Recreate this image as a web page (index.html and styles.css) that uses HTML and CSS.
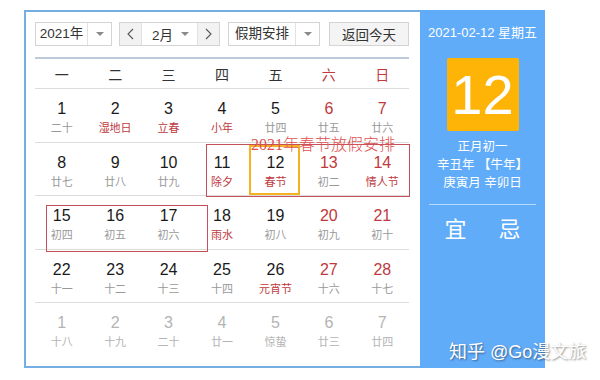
FILE: index.html
```html
<!DOCTYPE html>
<html lang="zh-CN">
<head>
    <meta charset="UTF-8">
    <meta name="viewport" content="width=device-width, initial-scale=1.0">
    <title>万年历</title>
    <link rel="stylesheet" href="styles.css">
</head>
<body>
    <div class="frame">
        <div class="main">
            <div class="toolbar">
                <div class="select year">
                    <span class="val">2021年</span>
                    <span class="arrow"><i class="caret"></i></span>
                </div>
                <div class="month-group">
                    <span class="nav">
                        <svg width="7" height="12" viewBox="0 0 7 12"><path d="M6 1L1 6l5 5" fill="none" stroke="#555" stroke-width="1.1"/></svg>
                    </span>
                    <div class="month">
                        <span>2月</span>
                        <i class="caret"></i>
                    </div>
                    <span class="nav">
                        <svg width="7" height="12" viewBox="0 0 7 12"><path d="M1 1l5 5-5 5" fill="none" stroke="#555" stroke-width="1.1"/></svg>
                    </span>
                </div>
                <div class="select holiday">
                    <span class="val">假期安排</span>
                    <span class="arrow"><i class="caret"></i></span>
                </div>
                <button class="today-btn">返回今天</button>
            </div>

            <div class="cal">
                <div class="week">
                    <span>一</span><span>二</span><span>三</span><span>四</span><span>五</span>
                    <span class="red">六</span><span class="red">日</span>
                </div>
                <div class="row">
                    <div class="cell"><b>1</b><em>二十</em></div>
                    <div class="cell"><b>2</b><em class="fest">湿地日</em></div>
                    <div class="cell"><b>3</b><em class="fest">立春</em></div>
                    <div class="cell"><b>4</b><em class="fest">小年</em></div>
                    <div class="cell"><b>5</b><em>廿四</em></div>
                    <div class="cell weekend"><b>6</b><em>廿五</em></div>
                    <div class="cell weekend"><b>7</b><em>廿六</em></div>
                </div>
                <div class="row short">
                    <div class="cell"><b>8</b><em>廿七</em></div>
                    <div class="cell"><b>9</b><em>廿八</em></div>
                    <div class="cell"><b>10</b><em>廿九</em></div>
                    <div class="cell"><b>11</b><em class="fest">除夕</em></div>
                    <div class="cell today"><b>12</b><em class="fest">春节</em></div>
                    <div class="cell weekend"><b>13</b><em>初二</em></div>
                    <div class="cell weekend"><b>14</b><em class="fest">情人节</em></div>
                </div>
                <div class="row">
                    <div class="cell"><b>15</b><em>初四</em></div>
                    <div class="cell"><b>16</b><em>初五</em></div>
                    <div class="cell"><b>17</b><em>初六</em></div>
                    <div class="cell"><b>18</b><em class="fest">雨水</em></div>
                    <div class="cell"><b>19</b><em>初八</em></div>
                    <div class="cell weekend"><b>20</b><em>初九</em></div>
                    <div class="cell weekend"><b>21</b><em>初十</em></div>
                </div>
                <div class="row short">
                    <div class="cell"><b>22</b><em>十一</em></div>
                    <div class="cell"><b>23</b><em>十二</em></div>
                    <div class="cell"><b>24</b><em>十三</em></div>
                    <div class="cell"><b>25</b><em>十四</em></div>
                    <div class="cell"><b>26</b><em class="fest">元宵节</em></div>
                    <div class="cell weekend"><b>27</b><em>十六</em></div>
                    <div class="cell weekend"><b>28</b><em>十七</em></div>
                </div>
                <div class="row last">
                    <div class="cell other"><b>1</b><em>十八</em></div>
                    <div class="cell other"><b>2</b><em>十九</em></div>
                    <div class="cell other"><b>3</b><em>二十</em></div>
                    <div class="cell other"><b>4</b><em>廿一</em></div>
                    <div class="cell other"><b>5</b><em>惊蛰</em></div>
                    <div class="cell other"><b>6</b><em>廿三</em></div>
                    <div class="cell other"><b>7</b><em>廿四</em></div>
                </div>

                <!-- hand-drawn notes on top of the grid -->
                <div class="mark mark-a"></div>
                <div class="mark mark-b"></div>
                <div class="note">2021年春节放假安排</div>
            </div>
        </div>

        <div class="side">
            <div class="side-date">2021-02-12 星期五</div>
            <div class="big-day">12</div>
            <div class="lunar">
                <p>正月初一</p>
                <p>辛丑年 【牛年】</p>
                <p>庚寅月 辛卯日</p>
            </div>
            <div class="yi-ji">
                <span>宜</span><span>忌</span>
            </div>
        </div>
    </div>

    <div class="watermark">知乎 @Go漫文旅</div>
</body>
</html>
```

FILE: styles.css
```css
body, html {
    margin: 0;
    padding: 0;
}
body {
    font-family: "Liberation Sans", "Noto Sans CJK SC", sans-serif;
    color: #333;
    background: #fff;
    width: 600px;
    height: 380px;
    position: relative;
    overflow: hidden;
}
.frame {
    display: flex;
    margin: 10px 0 0 24px;
    width: 521px;
    height: 358px;
}
.main {
    width: 396px;
    box-sizing: border-box;
    border: 2px solid #74aee2;
    border-right: none;
    padding: 10px 11px 0 9px;
    background: #fff;
}

/* toolbar */
.toolbar {
    display: flex;
    height: 24px;
    font-size: 13.5px;
}
.select, .month-group, .today-btn {
    box-sizing: border-box;
    height: 24px;
    border: 1px solid #d4d4d4;
    background: #fff;
    display: flex;
    align-items: center;
}
.select .val {
    flex: 1;
    text-align: center;
    border-right: 1px solid #e2e2e2;
    line-height: 22px;
}
.select .arrow {
    width: 23px;
    display: flex;
    justify-content: center;
}
.caret {
    display: block;
    width: 0;
    height: 0;
    border-left: 4px solid transparent;
    border-right: 4px solid transparent;
    border-top: 4px solid #8a8a8a;
}
.year {
    width: 77px;
    margin-right: 7px;
}
.month-group {
    width: 101px;
    margin-right: 8px;
}
.month-group .nav {
    width: 21px;
    height: 22px;
    background: #f2f2f2;
    display: flex;
    align-items: center;
    justify-content: center;
}
.month-group .nav:first-child {
    border-right: 1px solid #e2e2e2;
}
.month-group .nav:last-child {
    border-left: 1px solid #e2e2e2;
}
.month {
    flex: 1;
    display: flex;
    align-items: center;
    justify-content: space-between;
    padding: 0 8px 0 10px;
}
.holiday {
    width: 92px;
    margin-right: 9px;
}
.today-btn {
    width: 80px;
    justify-content: center;
    background: #f4f4f4;
    font-family: inherit;
    font-size: 13.5px;
    color: #333;
    padding: 0;
}

/* calendar grid */
.cal {
    position: relative;
    margin-top: 11px;
    border-top: 2px solid #bccad9;
}
.week, .row {
    display: grid;
    grid-template-columns: repeat(7, 1fr);
    border-bottom: 1px solid #dcdcdc;
}
.week {
    height: 29px;
    align-items: center;
    text-align: center;
    font-size: 14px;
    color: #333;
}
.week .red {
    color: #c0393e;
}
.row {
    height: 53px;
}
.row.short {
    height: 52px;
}
.row.last {
    border-bottom: none;
}
.cell {
    position: relative;
    text-align: center;
    padding-top: 12px;
}
.cell b {
    display: block;
    font-weight: normal;
    font-size: 16px;
    line-height: 16px;
    color: #1a1a1a;
}
.cell em {
    display: block;
    font-style: normal;
    font-size: 11px;
    line-height: 14px;
    margin-top: 4px;
    color: #999;
}
.cell em.fest {
    color: #c0393e;
}
.cell.weekend b {
    color: #c0393e;
}
.cell.other b, .cell.other em {
    color: #b4b4b4;
}
.cell.today::after {
    content: "";
    position: absolute;
    top: 2px;
    bottom: 0;
    left: 0;
    right: 2px;
    border: 2px solid #f4b223;
}

.mark {
    position: absolute;
    box-sizing: border-box;
    border: 1px solid #c4505a;
}
.mark-a {
    left: 171px;
    top: 85px;
    width: 204px;
    height: 53px;
}
.mark-b {
    left: 11px;
    top: 146px;
    width: 162px;
    height: 47px;
}
.note {
    position: absolute;
    left: 216px;
    top: 77px;
    font-family: "Liberation Serif", "Noto Sans CJK SC", serif;
    font-size: 16px;
    line-height: 18px;
    color: #e05050;
    font-weight: 300;
    white-space: nowrap;
}

/* side panel */
.side {
    width: 125px;
    background: #61acf9;
    color: #fff;
    text-align: center;
    padding-top: 14px;
}
.side-date {
    font-size: 13px;
    line-height: 18px;
}
.big-day {
    width: 72px;
    height: 73px;
    margin: 16px auto 0;
    background: #feb307;
    border-radius: 2px;
    font-size: 56px;
    line-height: 73px;
}
.lunar {
    margin-top: 7px;
    font-size: 12.5px;
    line-height: 18px;
}
.lunar p {
    margin: 0;
}
.yi-ji {
    margin: 12px 9px 0;
    padding-top: 12px;
    border-top: 1px solid rgba(255, 255, 255, 0.55);
    display: flex;
    justify-content: center;
    gap: 32px;
    font-size: 22px;
    line-height: 26px;
}

.watermark {
    position: absolute;
    left: 449px;
    top: 341px;
    font-size: 18px;
    line-height: 22px;
    color: #fff;
    text-shadow: 1px 1px 2px rgba(0, 0, 0, 0.45);
    white-space: nowrap;
}
```
